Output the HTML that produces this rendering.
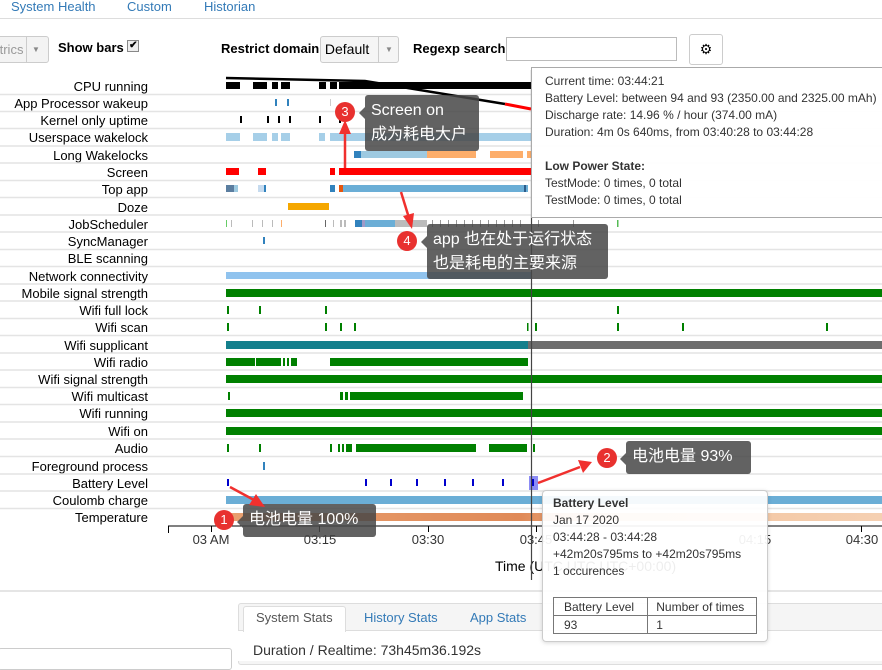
<!DOCTYPE html>
<html><head><meta charset="utf-8"><style>
body{margin:0;width:882px;height:655px;overflow:hidden;background:#fff;font-family:"Liberation Sans","Noto Sans CJK SC",sans-serif;position:relative}
.a{position:absolute;white-space:nowrap}
.nav{color:#337ab7;font-size:13px;top:-1px}
.lbl{position:absolute;right:734px;font-size:13px;color:#000;white-space:nowrap}
.box{position:absolute;background:rgba(70,70,70,.85);color:#fff;border-radius:3px;font-size:16px;line-height:24px;padding:4px 6px;box-sizing:border-box}
.box:before{content:"";position:absolute;left:-6px;top:12px;border:6px solid transparent;border-right-color:rgba(70,70,70,.85);border-left:0}
.c{position:absolute;width:20px;height:20px;border-radius:50%;background:#e8312f;color:#fff;font-size:13px;text-align:center;line-height:20px}
.tt{position:absolute;font-size:12px;color:#333;line-height:17px}
</style></head><body>
<div class="a nav" style="left:11px">System Health</div>
<div class="a nav" style="left:127px">Custom</div>
<div class="a nav" style="left:204px">Historian</div>
<div class="a" style="left:0;top:18px;width:882px;height:1px;background:#ddd"></div>

<div class="a" style="left:-5px;top:36px;width:52px;height:25px;border:1px solid #ccc;border-radius:3px;background:#f3f3f3;font-size:13px;color:#999;line-height:25px">&nbsp;trics<span style="position:absolute;left:30px;top:0;width:1px;height:25px;background:#ccc"></span><span style="position:absolute;left:36px;font-size:8px;color:#888">▼</span></div>
<div class="a" style="left:58px;top:40px;font-size:13px;font-weight:bold">Show bars <span style="display:inline-block;width:10px;height:10px;border:1px solid #888;font-size:10px;line-height:10px;text-align:center;vertical-align:top;background:#eee">✔</span></div>
<div class="a" style="left:221px;top:41px;font-size:13px;font-weight:bold">Restrict domain</div>
<div class="a" style="left:320px;top:36px;width:77px;height:25px;border:1px solid #ccc;border-radius:3px;background:#f5f5f5;font-size:14px;line-height:25px">&nbsp;Default<span style="position:absolute;left:57px;top:0;width:1px;height:25px;background:#ccc"></span><span style="position:absolute;left:64px;font-size:8px;color:#888">▼</span></div>
<div class="a" style="left:413px;top:41px;font-size:13px;font-weight:bold">Regexp search</div>
<div class="a" style="left:506px;top:37px;width:169px;height:22px;border:1px solid #bbb"></div>
<div class="a" style="left:689px;top:34px;width:32px;height:29px;border:1px solid #ccc;border-radius:3px;text-align:center;line-height:29px;font-size:14px">⚙</div>

<div class="lbl" style="top:79px">CPU running</div>
<div class="lbl" style="top:96px">App Processor wakeup</div>
<div class="lbl" style="top:113px">Kernel only uptime</div>
<div class="lbl" style="top:130px">Userspace wakelock</div>
<div class="lbl" style="top:148px">Long Wakelocks</div>
<div class="lbl" style="top:165px">Screen</div>
<div class="lbl" style="top:182px">Top app</div>
<div class="lbl" style="top:200px">Doze</div>
<div class="lbl" style="top:217px">JobScheduler</div>
<div class="lbl" style="top:234px">SyncManager</div>
<div class="lbl" style="top:251px">BLE scanning</div>
<div class="lbl" style="top:269px">Network connectivity</div>
<div class="lbl" style="top:286px">Mobile signal strength</div>
<div class="lbl" style="top:303px">Wifi full lock</div>
<div class="lbl" style="top:320px">Wifi scan</div>
<div class="lbl" style="top:338px">Wifi supplicant</div>
<div class="lbl" style="top:355px">Wifi radio</div>
<div class="lbl" style="top:372px">Wifi signal strength</div>
<div class="lbl" style="top:389px">Wifi multicast</div>
<div class="lbl" style="top:406px">Wifi running</div>
<div class="lbl" style="top:424px">Wifi on</div>
<div class="lbl" style="top:441px">Audio</div>
<div class="lbl" style="top:459px">Foreground process</div>
<div class="lbl" style="top:476px">Battery Level</div>
<div class="lbl" style="top:493px">Coulomb charge</div>
<div class="lbl" style="top:510px">Temperature</div>

<svg class="a" style="left:0;top:0" width="882" height="655">
<g stroke="#e4e4e4" stroke-width="1.5">
<line x1="0" x2="882" y1="94.5" y2="94.5"/><line x1="0" x2="882" y1="111.5" y2="111.5"/><line x1="0" x2="882" y1="128.5" y2="128.5"/><line x1="0" x2="882" y1="146" y2="146"/><line x1="0" x2="882" y1="163" y2="163"/><line x1="0" x2="882" y1="180.5" y2="180.5"/><line x1="0" x2="882" y1="197.5" y2="197.5"/><line x1="0" x2="882" y1="215" y2="215"/><line x1="0" x2="882" y1="232" y2="232"/><line x1="0" x2="882" y1="249.5" y2="249.5"/><line x1="0" x2="882" y1="266.5" y2="266.5"/><line x1="0" x2="882" y1="284" y2="284"/><line x1="0" x2="882" y1="301" y2="301"/><line x1="0" x2="882" y1="318.5" y2="318.5"/><line x1="0" x2="882" y1="335.5" y2="335.5"/><line x1="0" x2="882" y1="353" y2="353"/><line x1="0" x2="882" y1="370" y2="370"/><line x1="0" x2="882" y1="387.5" y2="387.5"/><line x1="0" x2="882" y1="404.5" y2="404.5"/><line x1="0" x2="882" y1="422" y2="422"/><line x1="0" x2="882" y1="439" y2="439"/><line x1="0" x2="882" y1="456.5" y2="456.5"/><line x1="0" x2="882" y1="474" y2="474"/><line x1="0" x2="882" y1="491" y2="491"/><line x1="0" x2="882" y1="508.5" y2="508.5"/>
</g>
<!-- CPU -->
<g fill="#000"><rect x="226" y="82" width="14" height="7"/><rect x="253" y="82" width="14" height="7"/><rect x="272" y="82" width="6" height="7"/><rect x="281" y="82" width="9" height="7"/><rect x="319" y="82" width="7" height="7"/><rect x="330" y="82" width="7" height="7"/><rect x="339" y="82" width="192" height="7"/></g>
<polyline points="226,78 365,81 505,104" stroke="#000" stroke-width="2.5" fill="none"/>
<line x1="505" y1="104" x2="531" y2="109" stroke="#f00" stroke-width="3"/>
<!-- App wakeup -->
<rect x="275" y="99" width="2" height="7" fill="#3182bd"/><rect x="287" y="99" width="2" height="7" fill="#3182bd"/><rect x="330" y="99" width="1" height="7" fill="#ccc"/>
<!-- Kernel -->
<g fill="#000"><rect x="240" y="116" width="2" height="7"/><rect x="267" y="116" width="2" height="7"/><rect x="278" y="116" width="2" height="7"/><rect x="289" y="116" width="2" height="7"/><rect x="319" y="116" width="2" height="7"/><rect x="339" y="116" width="2" height="7"/></g>
<!-- Userspace -->
<g fill="#a6cfe8"><rect x="226" y="133" width="14" height="8"/><rect x="253" y="133" width="14" height="8"/><rect x="272" y="133" width="6" height="8"/><rect x="281" y="133" width="9" height="8"/><rect x="319" y="133" width="6" height="8"/><rect x="330" y="133" width="201" height="8"/></g>
<!-- Long wakelocks -->
<rect x="354" y="151" width="7" height="7" fill="#3182bd"/><rect x="361" y="151" width="66" height="7" fill="#9ecae1"/><rect x="427" y="151" width="49" height="7" fill="#fdae6b"/><rect x="490" y="151" width="33" height="7" fill="#fdae6b"/><rect x="527" y="151" width="4" height="7" fill="#fdae6b"/>
<!-- Screen -->
<g fill="#f00"><rect x="226" y="168" width="13" height="7"/><rect x="258" y="168" width="8" height="7"/><rect x="330" y="168" width="5" height="7"/><rect x="339" y="168" width="192" height="7"/></g>
<!-- Top app -->
<rect x="226" y="185" width="8" height="7" fill="#5b7ea0"/><rect x="234" y="185" width="4" height="7" fill="#9ecae1"/><rect x="258" y="185" width="6" height="7" fill="#c6dbef"/><rect x="264" y="185" width="2" height="7" fill="#3182bd"/><rect x="330" y="185" width="5" height="7" fill="#3182bd"/><rect x="339" y="185" width="4" height="7" fill="#e6550d"/><rect x="343" y="185" width="6" height="7" fill="#6baed6"/><rect x="349" y="185" width="179" height="7" fill="#6baed6"/><rect x="524" y="185" width="2" height="7" fill="#2b5c8a"/>
<!-- Doze -->
<rect x="288" y="203" width="41" height="7" fill="#f5a700"/>
<!-- Job -->
<g fill="#bbb"><rect x="231" y="220" width="1" height="7"/><rect x="252" y="220" width="1" height="7"/><rect x="262" y="220" width="1" height="7"/><rect x="272" y="220" width="1" height="7"/><rect x="325" y="220" width="1" height="7" fill="#666"/><rect x="333" y="220" width="1" height="7"/><rect x="340" y="220" width="2" height="7"/><rect x="344" y="220" width="2" height="7"/><rect x="395" y="220" width="32" height="7"/></g>
<rect x="226" y="220" width="1" height="7" fill="#6c6"/><rect x="281" y="220" width="1" height="7" fill="#fdae6b"/>
<rect x="355" y="220" width="7" height="7" fill="#3182bd"/><rect x="362" y="220" width="3" height="7" fill="#9e9ac8"/><rect x="365" y="220" width="30" height="7" fill="#6baed6"/>
<g fill="#999"><rect x="432" y="220" width="1" height="7"/><rect x="440" y="220" width="1" height="7"/><rect x="448" y="220" width="1" height="7"/><rect x="456" y="220" width="1" height="7"/><rect x="464" y="220" width="1" height="7"/><rect x="472" y="220" width="1" height="7"/><rect x="480" y="220" width="1" height="7"/><rect x="488" y="220" width="1" height="7"/><rect x="496" y="220" width="1" height="7"/><rect x="504" y="220" width="1" height="7"/><rect x="512" y="220" width="1" height="7"/><rect x="520" y="220" width="1" height="7"/><rect x="538" y="220" width="1" height="7"/><rect x="573" y="220" width="1" height="7"/></g>
<rect x="617" y="220" width="1.5" height="7" fill="#5b5"/>
<!-- Sync -->
<rect x="263" y="237" width="2" height="7" fill="#3182bd"/>
<!-- Network -->
<rect x="226" y="272" width="305" height="7" fill="#90c3ee"/>
<g fill="#008000">
<rect x="226" y="289" width="656" height="8"/>
<rect x="227" y="306" width="2" height="8"/><rect x="259" y="306" width="2" height="8"/><rect x="325" y="306" width="2" height="8"/><rect x="617" y="306" width="2" height="8"/>
<rect x="227" y="323" width="2" height="8"/><rect x="325" y="323" width="2" height="8"/><rect x="340" y="323" width="2" height="8"/><rect x="354" y="323" width="2" height="8"/><rect x="527" y="323" width="1.5" height="8"/><rect x="535" y="323" width="2" height="8"/><rect x="617" y="323" width="2" height="8"/><rect x="682" y="323" width="2" height="8"/><rect x="826" y="323" width="2" height="8"/>
<rect x="226" y="358" width="29" height="8"/><rect x="256" y="358" width="25" height="8"/><rect x="283" y="358" width="2" height="8"/><rect x="287" y="358" width="2" height="8"/><rect x="291" y="358" width="6" height="8"/><rect x="330" y="358" width="198" height="8"/>
<rect x="226" y="375" width="656" height="8"/>
<rect x="228" y="392" width="2" height="8"/><rect x="340" y="392" width="3" height="8"/><rect x="345" y="392" width="3" height="8"/><rect x="350" y="392" width="173" height="8"/>
<rect x="226" y="409" width="656" height="8"/>
<rect x="226" y="427" width="656" height="8"/>
<rect x="227" y="444" width="2" height="8"/><rect x="259" y="444" width="2" height="8"/><rect x="330" y="444" width="2" height="8"/><rect x="338" y="444" width="2" height="8"/><rect x="342" y="444" width="2" height="8"/><rect x="346" y="444" width="6" height="8"/><rect x="356" y="444" width="120" height="8"/><rect x="489" y="444" width="38" height="8"/><rect x="533" y="444" width="2" height="8"/>
</g>
<rect x="226" y="341" width="302" height="8" fill="#137f8c"/><rect x="528" y="341" width="354" height="8" fill="#6d6d6d"/>
<rect x="263" y="462" width="2" height="8" fill="#3182bd"/>
<g fill="#00c"><rect x="227" y="479" width="2" height="7"/><rect x="365" y="479" width="2" height="7"/><rect x="390" y="479" width="2" height="7"/><rect x="416" y="479" width="2" height="7"/><rect x="444" y="479" width="2" height="7"/><rect x="472" y="479" width="2" height="7"/><rect x="502" y="479" width="2" height="7"/></g>
<rect x="529" y="476" width="9" height="14" fill="#8c8cf5"/><rect x="532" y="479" width="2" height="7" fill="#00c"/>
<rect x="226" y="496" width="656" height="8" fill="#6baed6"/>
<defs><linearGradient id="tg" x1="0" x2="1"><stop offset="0" stop-color="#e8a070"/><stop offset="0.45" stop-color="#e08a58"/><stop offset="0.6" stop-color="#f2c29c"/><stop offset="1" stop-color="#f5d0b2"/></linearGradient></defs>
<rect x="226" y="513" width="656" height="8" fill="url(#tg)"/>
<!-- axis -->
<line x1="168" y1="526" x2="882" y2="526" stroke="#000"/>
<g stroke="#000"><line x1="168.5" y1="526" x2="168.5" y2="533"/><line x1="211.5" y1="526" x2="211.5" y2="532"/><line x1="319.5" y1="526" x2="319.5" y2="532"/><line x1="428.5" y1="526" x2="428.5" y2="532"/><line x1="536.5" y1="526" x2="536.5" y2="532"/><line x1="861.5" y1="526" x2="861.5" y2="532"/></g>
<g font-size="13" fill="#333" text-anchor="middle"><text x="211" y="544">03 AM</text><text x="320" y="544">03:15</text><text x="428" y="544">03:30</text><text x="536" y="544">03:45</text><text x="755" y="544">04:15</text><text x="862" y="544">04:30</text></g>
<text x="495" y="571" font-size="14" fill="#000">Time (UTC UTC UTC+00:00)</text>
<line x1="531.5" y1="70" x2="531.5" y2="580" stroke="#444" stroke-width="1.2"/>
<line x1="0" y1="591" x2="882" y2="591" stroke="#e5e5e5" stroke-width="2"/>
</svg>

<!-- bottom -->
<div class="a" style="left:238px;top:603px;width:650px;height:60px;border:1px solid #ddd;border-radius:3px;background:#f5f5f5"></div>
<div class="a" style="left:238px;top:630px;width:650px;height:30px;background:#fff;border-top:1px solid #ddd"></div>
<div class="a" style="left:243px;top:606px;width:101px;height:25px;background:#fff;border:1px solid #ddd;border-bottom:none;border-radius:3px 3px 0 0"></div>
<div class="a" style="left:256px;top:610px;font-size:13px;color:#555">System Stats</div>
<div class="a" style="left:364px;top:610px;font-size:13px;color:#337ab7">History Stats</div>
<div class="a" style="left:470px;top:610px;font-size:13px;color:#337ab7">App Stats</div>
<div class="a" style="left:253px;top:642px;font-size:14px;color:#333">Duration / Realtime: 73h45m36.192s</div>
<div class="a" style="left:-2px;top:648px;width:232px;height:20px;border:1px solid #ccc;border-radius:3px"></div>

<!-- tooltip 1 -->
<div class="a" style="left:531px;top:67px;width:360px;height:149px;background:rgba(255,255,255,.96);border:1px solid #aaa"></div>
<div class="tt" style="left:545px;top:73px">Current time: 03:44:21<br>Battery Level: between 94 and 93 (2350.00 and 2325.00 mAh)<br>Discharge rate: 14.96 % / hour (374.00 mA)<br>Duration: 4m 0s 640ms, from 03:40:28 to 03:44:28<br><br><b>Low Power State:</b><br>TestMode: 0 times, 0 total<br>TestMode: 0 times, 0 total</div>

<!-- tooltip 2 -->
<div class="a" style="left:542px;top:490px;width:224px;height:150px;background:rgba(255,255,255,.93);border:1px solid #ccc;border-radius:4px;box-shadow:0 1px 4px rgba(0,0,0,.15)"></div>
<div class="tt" style="left:553px;top:495px"><b>Battery Level</b><br>Jan 17 2020<br>03:44:28 - 03:44:28<br>+42m20s795ms to +42m20s795ms<br>1 occurences</div>
<table class="a" style="left:553px;top:597px;width:204px;border-collapse:collapse;font-size:12px;color:#333">
<tr><td style="border:1px solid #777;padding:1px 10px;height:15px">Battery Level</td><td style="border:1px solid #777;padding:1px 8px">Number of times</td></tr>
<tr><td style="border:1px solid #777;padding:1px 10px;height:15px">93</td><td style="border:1px solid #777;padding:1px 8px">1</td></tr></table>

<!-- annotations -->
<div class="box" style="left:365px;top:95px;width:114px;height:56px">Screen on<br>成为耗电大户</div>
<div class="box" style="left:427px;top:224px;width:181px;height:55px">app 也在处于运行状态<br>也是耗电的主要来源</div>
<div class="box" style="left:626px;top:441px;width:125px;height:33px">电池电量 93%</div>
<div class="box" style="left:243px;top:504px;width:133px;height:33px">电池电量 100%</div>
<div class="c" style="left:335px;top:102px">3</div>
<div class="c" style="left:397px;top:231px">4</div>
<div class="c" style="left:597px;top:448px">2</div>
<div class="c" style="left:214px;top:510px">1</div>
<svg class="a" style="left:0;top:0" width="882" height="655">
<g fill="#f0302e" stroke="#f0302e">
<line x1="345" y1="168" x2="345" y2="130" stroke-width="2.5"/><polygon points="345,120 339,134 351,134" stroke="none"/>
<line x1="401" y1="192" x2="409" y2="218" stroke-width="2.5"/><polygon points="412,229 403,216 414,213" stroke="none"/>
<line x1="538" y1="483" x2="580" y2="467" stroke-width="2.5"/><polygon points="592,462 578,460 583,473" stroke="none"/>
<line x1="230" y1="487" x2="254" y2="500" stroke-width="2.5"/><polygon points="265,507 249,505 256,494" stroke="none"/>
</g></svg>
</body></html>
